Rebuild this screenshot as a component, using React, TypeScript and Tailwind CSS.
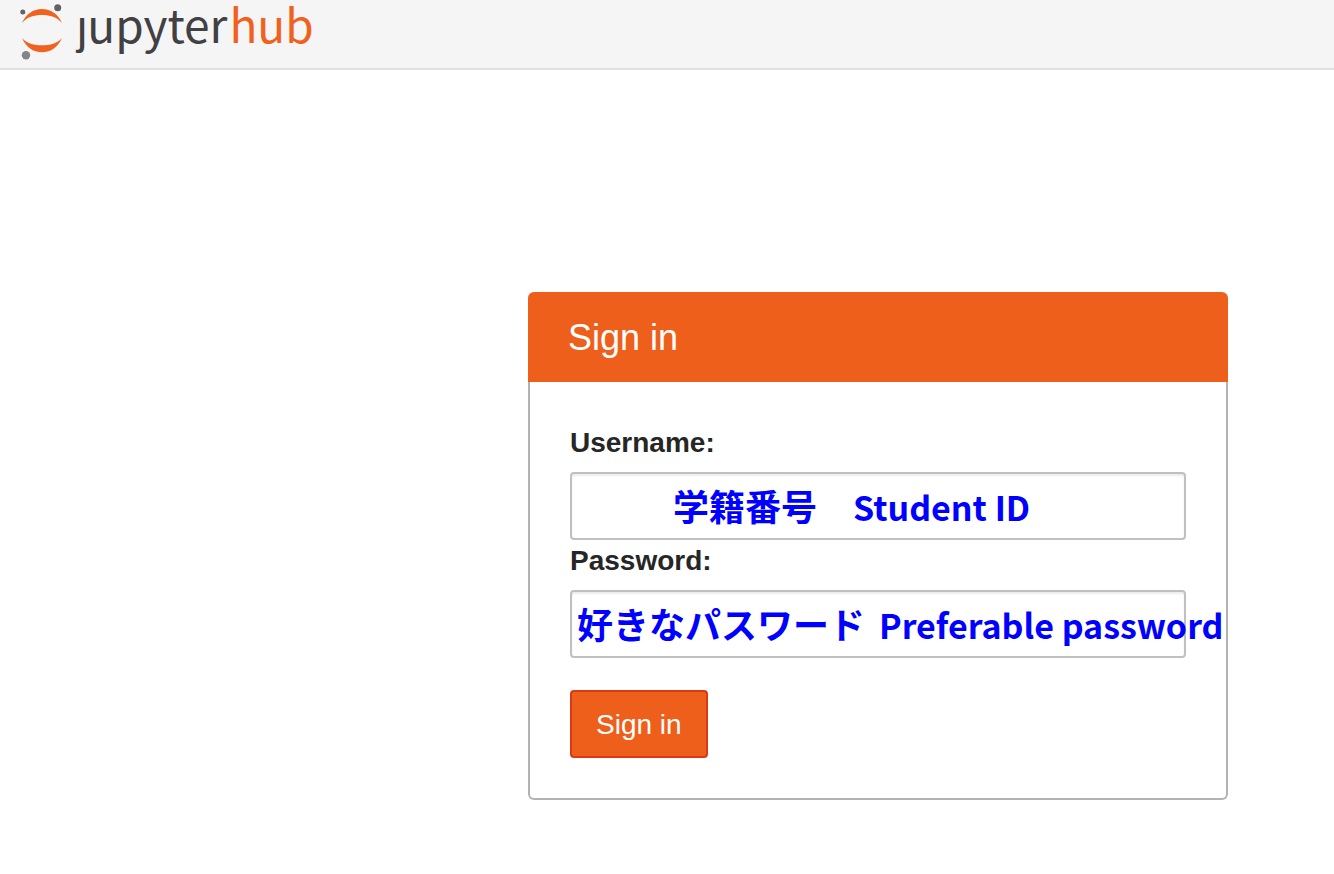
import type { ReactNode } from "react";

function Planet() {
  return (
    <svg viewBox="0 0 44 56" className="h-14 w-11 shrink-0" aria-hidden="true">
      <path d="M2 19C6 10 13 5 22 5s16 5 20 14C37 13 30 11 22 11S7 13 2 19Z" fill="#f06220" />
      <path d="M2 34C6 43 13 48.300 22 48.300s16-5.300 20-14.300C37 39.500 30 41.300 22 41.300S7 39.500 2 34Z" fill="#f06220" />
      <circle cx="2.800" cy="8" r="2.500" fill="#616262" />
      <circle cx="37.700" cy="3.700" r="3.500" fill="#616262" />
      <circle cx="6" cy="51.200" r="4.200" fill="#858585" />
    </svg>
  );
}

type FieldProps = {
  id: string;
  label: string;
  type: string;
  notePadding: string;
  children: ReactNode;
};

function Field({ id, label, type, notePadding, children }: FieldProps) {
  return (
    <div>
      <label htmlFor={id} className="mb-[10px] block pt-[2px] text-[28px] leading-[38px] font-bold">
        {label}
      </label>
      <div className="relative">
        <input
          id={id}
          type={type}
          className="block h-[68px] w-full rounded-[4px] border-2 border-[#c0c0c0] bg-white px-6 text-[26px] shadow-[inset_0_2px_2px_rgba(0,0,0,0.08)] outline-none focus:border-[#f0611e]"
        />
        <div
          className={`pointer-events-none absolute inset-y-0 left-0 flex items-baseline font-['Noto_Sans_CJK_JP',sans-serif] text-[36px] leading-[66px] font-bold whitespace-pre text-[#0000ff] ${notePadding}`}
        >
          {children}
        </div>
      </div>
    </div>
  );
}

export default function App() {
  return (
    <div className="min-h-screen bg-white font-['Liberation_Sans',Arial,sans-serif] text-[#262626]">
      <header className="flex h-[70px] items-start border-b-2 border-[#e0e0e0] bg-[#f5f5f5] px-5 pt-1">
        <a href="#" aria-label="jupyterhub" className="flex items-start gap-[13px]">
          <Planet />
          <span className="font-['Noto_Sans_CJK_JP',sans-serif] text-[46px] leading-[38px] text-[#414042]">
            ȷupyter<span className="pl-[2px] text-[#f0611e]">hub</span>
          </span>
        </a>
      </header>
      <main className="pt-[222px] pr-[106px] pb-[74px] pl-[528px]">
        <form className="w-full max-w-[700px]" onSubmit={(e) => e.preventDefault()}>
          <h1 className="rounded-t-[6px] bg-[#ee5f1b] px-10 pt-[23px] pb-[21px] text-[36px] leading-[46px] text-white">
            Sign in
          </h1>
          <div className="rounded-b-[6px] border-2 border-t-0 border-[#b3b3b3] px-10 pt-10 pb-10">
            <Field id="username" label="Username:" type="text" notePadding="pl-[103px]">
              <span>学籍番号</span>
              <span className="pl-9 text-[34px]">Student ID</span>
            </Field>
            <Field id="password" label="Password:" type="password" notePadding="pl-[7px]">
              <span>好きなパスワード</span>
              <span className="pl-[14px] text-[34px]">Preferable password</span>
            </Field>
            <button
              type="submit"
              className="mt-8 block h-[68px] rounded-[4px] border-2 border-[#d93a15] bg-[#ee5f1b] px-6 pt-[2px] text-[28px] leading-10 text-white"
            >
              Sign in
            </button>
          </div>
        </form>
      </main>
    </div>
  );
}
